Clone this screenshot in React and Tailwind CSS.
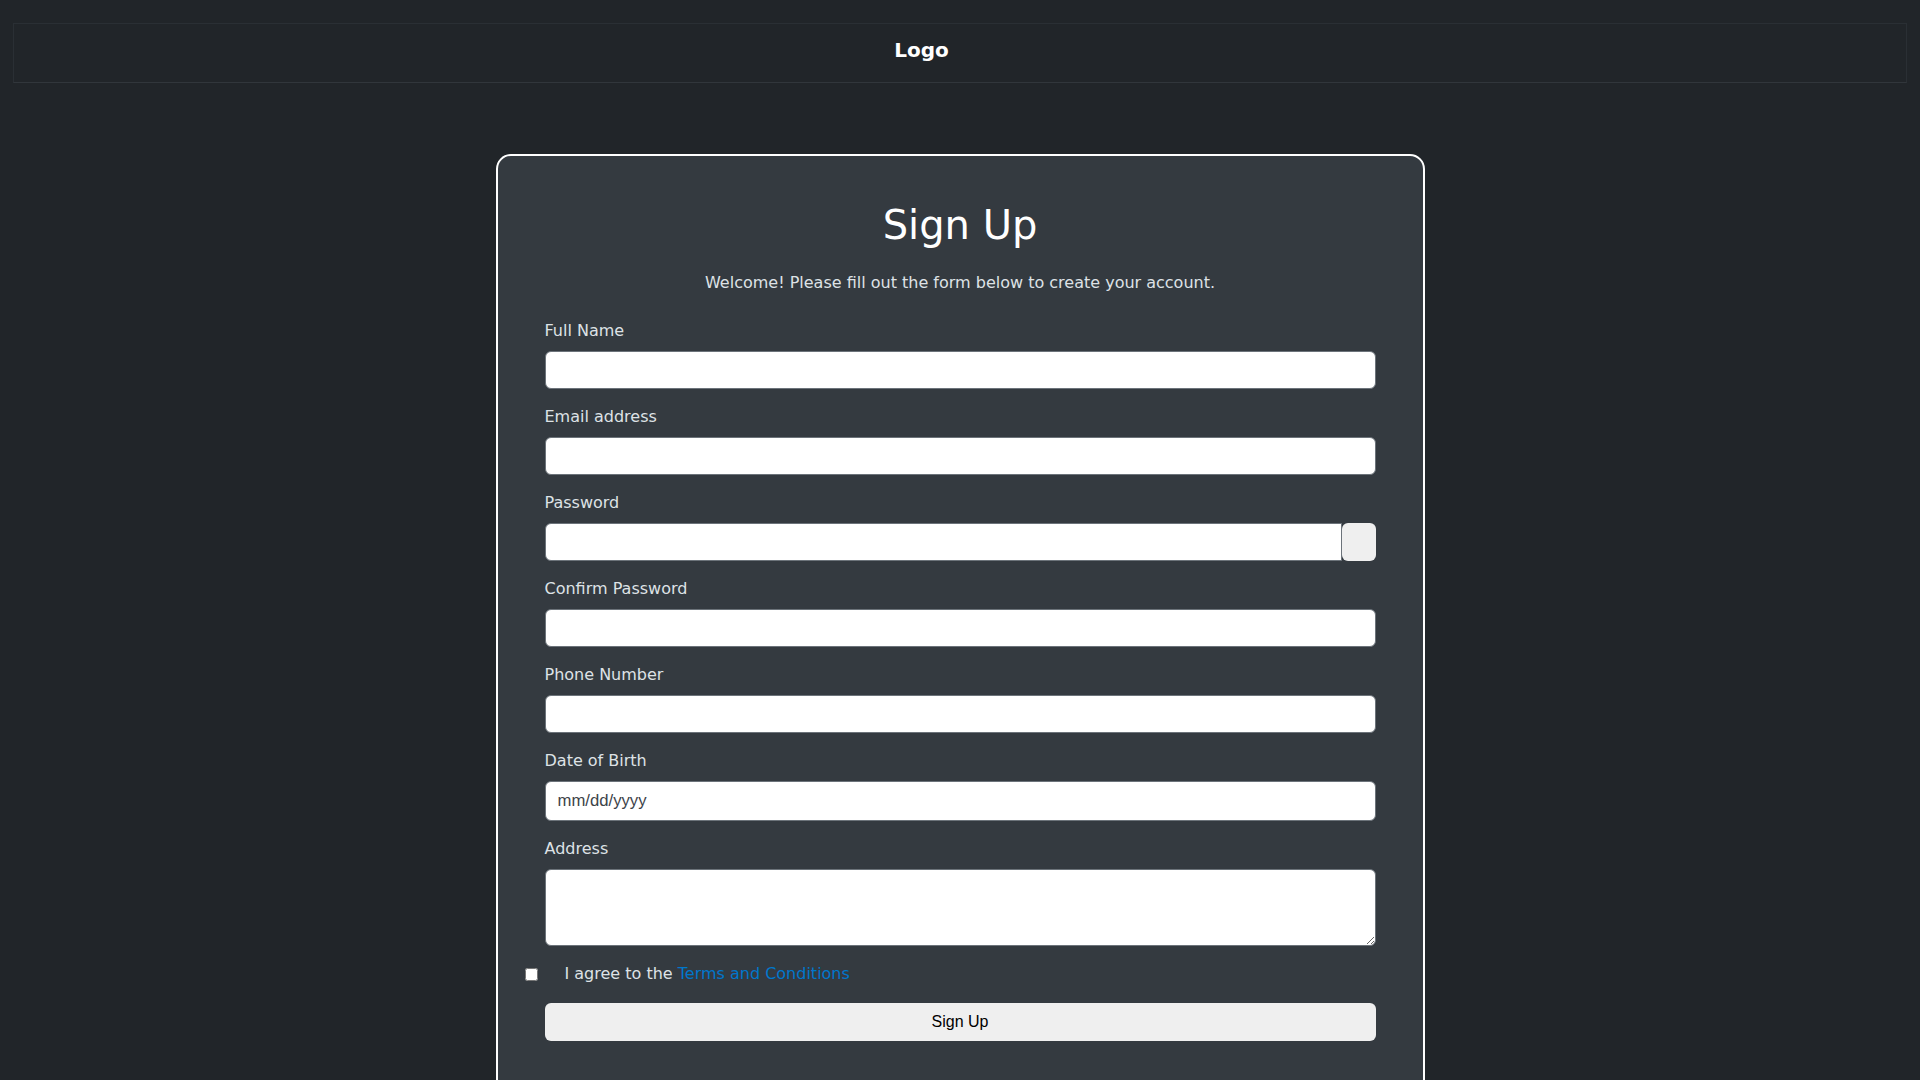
import React from "react";

function Field({ label, children }) {
  return (
    <div className="mb-4">
      <label className="block mb-2 text-base leading-6 text-[#dee2e6]">{label}</label>
      {children}
    </div>
  );
}

const inputCls =
  "block w-full h-[38px] bg-white border border-[#6c737a] rounded-[6px] px-3 text-base text-[#212529] font-['Liberation_Sans',Arial,sans-serif] outline-none";

export default function App() {
  return (
    <div className="min-h-screen bg-[#212529] font-['DejaVu_Sans','Noto_Sans',sans-serif] text-[#dee2e6] overflow-hidden">
      <header className="mx-[13px] mt-[23px] h-[60px] border border-[#2a2f34] border-b-[#31363b] flex items-center justify-center pr-[77px] pb-[6px]">
        <span className="text-[20px] leading-[30px] font-bold text-white">Logo</span>
      </header>

      <div className="flex justify-center mt-[71px]">
        <div className="w-[929px] h-[1000px] bg-[#343a40] border-2 border-white rounded-[15px] px-[47px] pt-[45px]">
          <h1 className="text-[40px] leading-[48px] text-center text-white mb-[22px]">Sign Up</h1>
          <p className="text-base leading-6 text-center mb-[24px]">
            Welcome! Please fill out the form below to create your account.
          </p>

          <Field label="Full Name">
            <input type="text" className={inputCls} />
          </Field>
          <Field label="Email address">
            <input type="email" className={inputCls} />
          </Field>
          <Field label="Password">
            <div className="flex">
              <input
                type="password"
                className="block flex-1 h-[38px] bg-white border border-[#6c737a] rounded-l-[6px] px-3 outline-none"
              />
              <button className="w-[34px] h-[38px] bg-[#efefef] rounded-[6px]"></button>
            </div>
          </Field>
          <Field label="Confirm Password">
            <input type="password" className={inputCls} />
          </Field>
          <Field label="Phone Number">
            <input type="tel" className={inputCls} />
          </Field>
          <Field label="Date of Birth">
            <div className="flex items-center w-full h-[40px] bg-white border border-[#6c737a] rounded-[6px] px-3 text-[16.7px] text-[#3d4349] font-['Liberation_Sans',Arial,sans-serif]">
              mm/dd/yyyy
            </div>
          </Field>
          <Field label="Address">
            <textarea className="block w-full h-[77px] bg-white border border-[#6c737a] rounded-[6px] px-3 py-1.5 outline-none" />
          </Field>

          <div className="flex items-center h-6 mb-[17px]">
            <input type="checkbox" className="-ml-[20px] w-[13px] h-[13px] m-0" />
            <span className="ml-[27px] text-base leading-6">
              I agree to the <a href="#" className="text-[#0077cc]">Terms and Conditions</a>
            </span>
          </div>

          <button className="block w-full h-[38px] bg-[#efefef] rounded-[6px] text-base text-black font-['Liberation_Sans',Arial,sans-serif]">
            Sign Up
          </button>
        </div>
      </div>
    </div>
  );
}
